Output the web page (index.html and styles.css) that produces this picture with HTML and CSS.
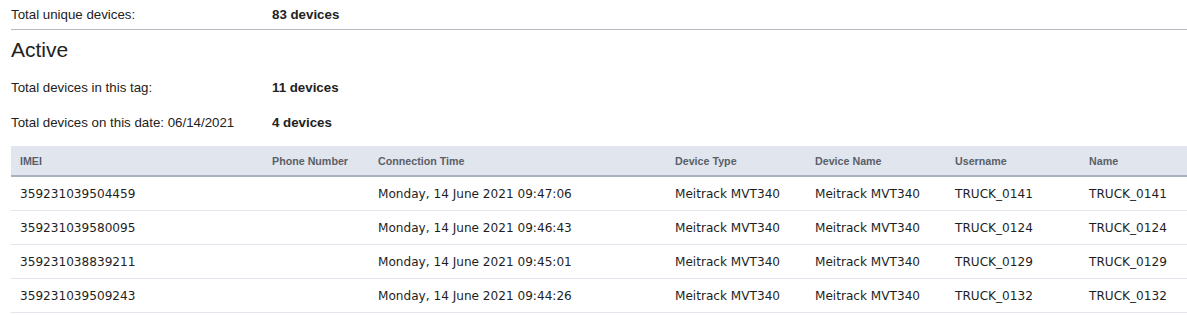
FILE: index.html
```html
<!DOCTYPE html>
<html>
<head>
    <title>Devices</title>
    <meta charset="UTF-8">
    <link rel="stylesheet" href="styles.css">
</head>
<body>
    <div class="container">
        <div class="stat-row total-row">
            <span class="stat-label">Total unique devices:</span>
            <span class="stat-value">83 devices</span>
        </div>

        <h2>Active</h2>

        <div class="stat-row">
            <span class="stat-label">Total devices in this tag:</span>
            <span class="stat-value">11 devices</span>
        </div>
        <div class="stat-row">
            <span class="stat-label">Total devices on this date: 06/14/2021</span>
            <span class="stat-value">4 devices</span>
        </div>

        <table class="data-table">
            <thead>
                <tr>
                    <th class="col-imei">IMEI</th>
                    <th class="col-phone">Phone Number</th>
                    <th class="col-time">Connection Time</th>
                    <th class="col-type">Device Type</th>
                    <th class="col-name">Device Name</th>
                    <th class="col-user">Username</th>
                    <th>Name</th>
                </tr>
            </thead>
            <tbody>
                <tr>
                    <td>359231039504459</td>
                    <td></td>
                    <td>Monday, 14 June 2021 09:47:06</td>
                    <td>Meitrack MVT340</td>
                    <td>Meitrack MVT340</td>
                    <td>TRUCK_0141</td>
                    <td>TRUCK_0141</td>
                </tr>
                <tr>
                    <td>359231039580095</td>
                    <td></td>
                    <td>Monday, 14 June 2021 09:46:43</td>
                    <td>Meitrack MVT340</td>
                    <td>Meitrack MVT340</td>
                    <td>TRUCK_0124</td>
                    <td>TRUCK_0124</td>
                </tr>
                <tr>
                    <td>359231038839211</td>
                    <td></td>
                    <td>Monday, 14 June 2021 09:45:01</td>
                    <td>Meitrack MVT340</td>
                    <td>Meitrack MVT340</td>
                    <td>TRUCK_0129</td>
                    <td>TRUCK_0129</td>
                </tr>
                <tr>
                    <td>359231039509243</td>
                    <td></td>
                    <td>Monday, 14 June 2021 09:44:26</td>
                    <td>Meitrack MVT340</td>
                    <td>Meitrack MVT340</td>
                    <td>TRUCK_0132</td>
                    <td>TRUCK_0132</td>
                </tr>
            </tbody>
        </table>
    </div>
</body>
</html>
```

FILE: styles.css
```css
body {
    font-family: 'Liberation Sans', Arial, sans-serif;
    margin: 0;
    background-color: white;
    color: #222;
}

.container {
    padding: 0 0 0 11px;
}

.stat-row {
    display: flex;
    font-size: 13.3px;
    height: 35px;
    align-items: center;
}

.total-row {
    height: 29px;
    border-bottom: 1px solid #b4b8c0;
}

.stat-label {
    width: 261px;
}

.stat-value {
    font-weight: bold;
}

h2 {
    font-size: 21px;
    font-weight: normal;
    margin: 0;
    height: 40px;
    line-height: 40px;
}

.data-table {
    width: 100%;
    border-collapse: collapse;
    margin-top: 6px;
}

.data-table th {
    background-color: #e1e5ed;
    color: #5a5f68;
    font-size: 10.7px;
    font-weight: bold;
    text-align: left;
    height: 29px;
    padding: 0 9px;
    border-bottom: 2px solid #a9b1c0;
}

.data-table td {
    font-family: 'DejaVu Sans', Verdana, sans-serif;
    font-size: 12.1px;
    color: #1e1e1e;
    height: 33px;
    padding: 0 9px;
    border-bottom: 1px solid #e3e6ec;
}

.col-imei { width: 234px; }
.col-phone { width: 88px; }
.col-time { width: 279px; }
.col-type { width: 122px; }
.col-name { width: 122px; }
.col-user { width: 116px; }
```
